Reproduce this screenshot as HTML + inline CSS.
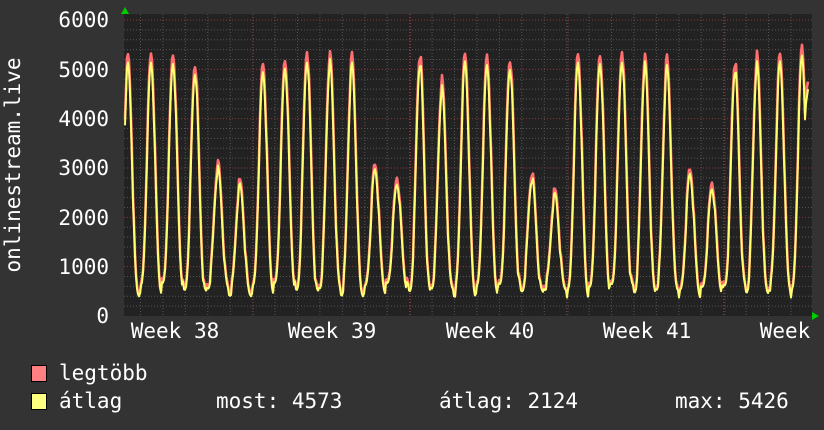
<!DOCTYPE html>
<html><head><meta charset="utf-8"><style>
html,body{margin:0;padding:0;background:#333;}
svg{display:block}
text{font-family:"DejaVu Sans Mono","Liberation Mono",monospace;fill:#fff;font-size:21px}
</style></head><body>
<svg id="g" width="824" height="430" xmlns="http://www.w3.org/2000/svg">
<rect width="824" height="430" fill="#333"/>
<rect x="124" y="14" width="688" height="302" fill="#222"/>
<g id="grid"></g>
<path id="mx" fill="none" stroke="#ff6f6f" stroke-width="2.6" stroke-linejoin="round"/>
<path id="av" fill="none" stroke="#ffff70" stroke-width="2" stroke-linejoin="round"/>
<polygon points="121,14 125,7 129,14" fill="#0c0"/>
<polygon points="812,312 819,316 812,320" fill="#0c0"/>
<g text-anchor="end">
<text x="109" y="27">6000</text><text x="109" y="77">5000</text><text x="109" y="126">4000</text>
<text x="109" y="175">3000</text><text x="109" y="225">2000</text><text x="109" y="274">1000</text>
<text x="109" y="323">0</text>
</g>
<text transform="translate(20,165) rotate(-90)" text-anchor="middle">onlinestream.live</text>
<g text-anchor="middle">
<text x="175" y="338">Week 38</text><text x="332" y="338">Week 39</text>
<text x="490" y="338">Week 40</text><text x="647" y="338">Week 41</text>
<text x="785" y="338">Week</text>
</g>
<rect x="31.5" y="365.5" width="15" height="16" fill="#ff8080" stroke="#000"/>
<rect x="31.5" y="393.5" width="15" height="16" fill="#ffff80" stroke="#000"/>
<text x="59" y="380">legtöbb</text>
<text x="59" y="408">átlag</text>
<text x="216" y="408">most: 4573</text>
<text x="439" y="408">átlag: 2124</text>
<text x="675" y="408">max: 5426</text>
</svg>
<script>
var g=document.getElementById('grid'),s='';
function Y(v){return 316-v*0.04933;}
for(var v=200;v<6000;v+=200){if(v%1000)s+='<line x1="124" x2="812" y1="'+Y(v)+'" y2="'+Y(v)+'" stroke="#555" stroke-dasharray="1,2"/>';}
for(var x=140.5;x<812;x+=22.43){s+='<line y1="14" y2="316" x1="'+x+'" x2="'+x+'" stroke="#555" stroke-dasharray="1,2"/>';}
for(var v=1000;v<=6000;v+=1000){s+='<line x1="124" x2="812" y1="'+Y(v)+'" y2="'+Y(v)+'" stroke="#8a3a3a" stroke-dasharray="1,2"/>';}
[253,410.5,568,725].forEach(function(x){s+='<line y1="14" y2="316" x1="'+x+'" x2="'+x+'" stroke="#8a3a3a" stroke-dasharray="1,2"/>';});
g.innerHTML=s;
var P=[[128,5300],[151,5350],[173,5350],[195,5150],[218,3100],[240,2750],[263,5150],[285,5250],[307,5400],[330,5350],[352,5300],[375,3100],[397,2800],[420,5350],[442,4800],[465,5350],[487,5300],[510,5250],[532,2900],[555,2550],[578,5350],[600,5350],[622,5400],[645,5300],[667,5250],[690,3000],[712,2700],[735,5200],[757,5300],[780,5350],[802,5500]];
function val(x){var best=0;for(var i=0;i<P.length;i++){var d=(x-P[i][0])/22.43;if(Math.abs(d)<0.5){var c=(1+Math.cos(2*Math.PI*d))/2;var f=Math.pow(c,1.6);var tr=450+((i*37)%5)*40;best=tr+(P[i][1]*0.96-tr)*f;}}return best||500;}
var a='',m='';
for(var x=125;x<=808;x+=1){var v=val(x);if(x>=805)v=4573+(val(805)-4573)*(808-x)/3;v+=((x*13)%7-3)*25;var w=v*1.03+((x*7)%5)*15;a+=(x==125?'M':'L')+x+','+Y(v).toFixed(1);m+=(x==125?'M':'L')+x+','+Y(w).toFixed(1);}
document.getElementById('av').setAttribute('d',a);document.getElementById('mx').setAttribute('d',m);
</script>
</body></html>
